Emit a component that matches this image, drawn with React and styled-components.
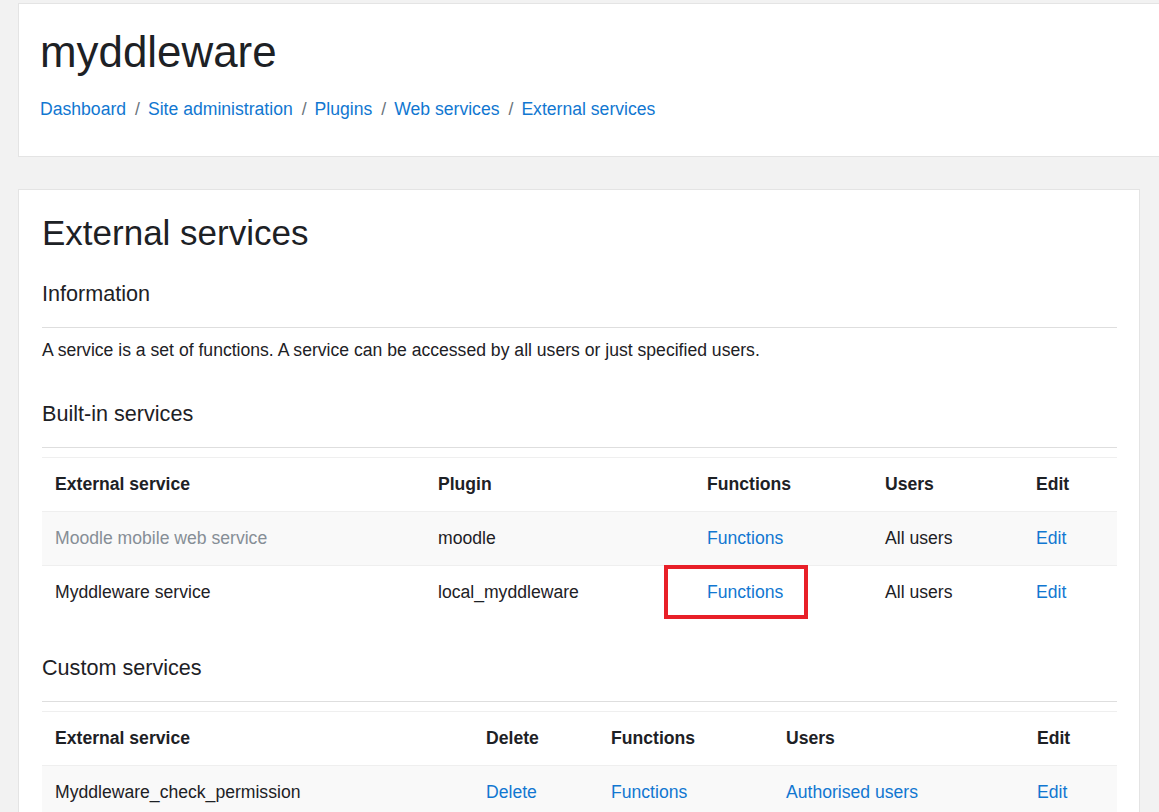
import React from 'react';
import styled, { createGlobalStyle } from 'styled-components';

const GlobalStyle = createGlobalStyle`
    html, body {
        margin: 0;
        padding: 0;
        background: #f2f2f2;
        overflow-x: hidden;
    }
    body {
        font-family: "Liberation Sans", Arial, sans-serif;
        font-size: 17.6px;
        line-height: 1.5;
        color: #1d2125;
    }
`;

// Column widths for both tables, in px.
const builtInCols = [383, 269, 178, 151, 94];
const customCols = [431, 125, 175, 251, 93];

const Page = styled.div`
    display: flex;
    flex-direction: column;
    gap: 32px;
    padding: 3px 19px 0 18px;
`;

const Card = styled.div`
    background: #fff;
    border: 1px solid #e4e4e4;
    margin-right: ${p => p.$bleed ? '-30px' : '0'};
`;

const HeaderCard = styled(Card)`
    padding: 22px 22px 34px 21px;
`;

const MainCard = styled(Card)`
    padding: 22px 22px 40px 23px;
    min-height: 700px;
`;

const SiteName = styled.h1`
    margin: 0;
    font-size: 43.9px;
    font-weight: 400;
    line-height: 1.2;
    color: #1d2125;
`;

const Crumbs = styled.nav`
    display: flex;
    align-items: center;
    gap: 8px;
    margin-top: 17px;
`;

const Sep = styled.span`
    color: #6a737b;
    margin-left: 1px;
`;

const Link = styled.a`
    color: #1177d1;
    text-decoration: none;
    cursor: pointer;
`;

const PageTitle = styled.h2`
    margin: 0;
    font-size: 35px;
    font-weight: 400;
    line-height: 1.2;
`;

const SectionTitle = styled.h3`
    margin: ${p => p.$top}px 0 0;
    font-size: 21.6px;
    font-weight: 400;
    line-height: 1.2;
    padding-bottom: 20px;
    border-bottom: 1px solid #dedede;
`;

const Para = styled.p`
    margin: 9px 0 0;
`;

const Table = styled.table`
    width: 100%;
    margin-top: ${p => p.$top}px;
    border-collapse: collapse;
    table-layout: fixed;
    border-top: 1px solid #efefef;
`;

const Th = styled.th`
    text-align: left;
    font-weight: 700;
    padding: 14px 13px;
    line-height: 25px;
    vertical-align: middle;
`;

const Row = styled.tr`
    background: ${p => p.$striped ? '#f9f9f9' : '#fff'};
    border-top: 1px solid #efefef;
`;

const Td = styled.td`
    position: relative;
    padding: 14px 13px;
    line-height: 25px;
    color: ${p => p.$dimmed ? '#868e96' : 'inherit'};
    vertical-align: middle;
`;

// Red annotation frame drawn over the cell.
const Highlight = styled.span`
    position: absolute;
    left: -30px;
    top: -1px;
    width: 144px;
    height: 54px;
    box-sizing: border-box;
    border: 4px solid #e81f28;
    pointer-events: none;
`;

const crumbs = ['Dashboard', 'Site administration', 'Plugins', 'Web services', 'External services'];

const DataTable = ({ cols, headers, rows, top }) => (
    <Table $top={top}>
        <colgroup>
            {cols.map((w, i) => <col key={i} style={{ width: w }} />)}
        </colgroup>
        <thead>
            <tr>
                {headers.map(h => <Th key={h}>{h}</Th>)}
            </tr>
        </thead>
        <tbody>
            {rows.map((r, i) => (
                <Row key={i} $striped={i % 2 === 0}>
                    {r.map((c, j) => (
                        <Td key={j} $dimmed={c.dimmed}>
                            {c.link ? <Link>{c.text}</Link> : c.text}
                            {c.mark && <Highlight />}
                        </Td>
                    ))}
                </Row>
            ))}
        </tbody>
    </Table>
);

const builtInRows = [
    [
        { text: 'Moodle mobile web service', dimmed: true },
        { text: 'moodle' },
        { text: 'Functions', link: true },
        { text: 'All users' },
        { text: 'Edit', link: true },
    ],
    [
        { text: 'Myddleware service' },
        { text: 'local_myddleware' },
        { text: 'Functions', link: true, mark: true },
        { text: 'All users' },
        { text: 'Edit', link: true },
    ],
];

const customRows = [
    [
        { text: 'Myddleware_check_permission' },
        { text: 'Delete', link: true },
        { text: 'Functions', link: true },
        { text: 'Authorised users', link: true },
        { text: 'Edit', link: true },
    ],
];

const App = () => (
    <>
        <GlobalStyle />
        <Page>
            <HeaderCard $bleed>
                <SiteName>myddleware</SiteName>
                <Crumbs>
                    {crumbs.map((c, i) => (
                        <React.Fragment key={c}>
                            {i > 0 && <Sep>/</Sep>}
                            <Link>{c}</Link>
                        </React.Fragment>
                    ))}
                </Crumbs>
            </HeaderCard>
            <MainCard>
                <PageTitle>External services</PageTitle>
                <SectionTitle $top={27}>Information</SectionTitle>
                <Para>A service is a set of functions. A service can be accessed by all users or just specified users.</Para>
                <SectionTitle $top={38}>Built-in services</SectionTitle>
                <DataTable
                    cols={builtInCols}
                    headers={['External service', 'Plugin', 'Functions', 'Users', 'Edit']}
                    rows={builtInRows}
                    top={9}
                />
                <SectionTitle $top={36}>Custom services</SectionTitle>
                <DataTable
                    cols={customCols}
                    headers={['External service', 'Delete', 'Functions', 'Users', 'Edit']}
                    rows={customRows}
                    top={9}
                />
            </MainCard>
        </Page>
    </>
);

export default App;
